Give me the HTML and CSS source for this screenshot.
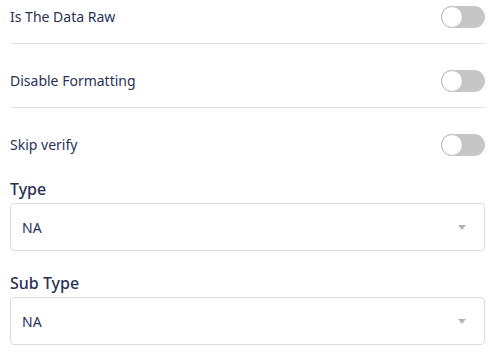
FILE: index.html
```html
<!DOCTYPE html>
<html lang="en">
<head>
    <meta charset="UTF-8">
    <title>Settings</title>
    <link rel="stylesheet" href="styles.css">
</head>
<body>
    <div class="settings">
        <div class="toggle-row divided">
            <span class="toggle-label">Is The Data Raw</span>
            <span class="switch"></span>
        </div>
        <div class="toggle-row divided">
            <span class="toggle-label">Disable Formatting</span>
            <span class="switch"></span>
        </div>
        <div class="toggle-row">
            <span class="toggle-label">Skip verify</span>
            <span class="switch"></span>
        </div>

        <div class="field">
            <label class="field-label">Type</label>
            <div class="select">
                <span>NA</span>
                <span class="arrow"></span>
            </div>
        </div>
        <div class="field">
            <label class="field-label">Sub Type</label>
            <div class="select">
                <span>NA</span>
                <span class="arrow"></span>
            </div>
        </div>
    </div>
</body>
</html>
```

FILE: styles.css
```css
body {
    margin: 0;
    padding: 0 7px 0 10px;
    background: #fff;
    color: #2b3156;
    font-family: "Noto Sans", "Open Sans", sans-serif;
}

.settings {
    display: flex;
    flex-direction: column;
}

.toggle-row {
    display: flex;
    align-items: center;
    justify-content: space-between;
    padding: 26px 0 15px;
}

.toggle-row:first-child {
    padding-top: 6px;
}

.toggle-row.divided {
    border-bottom: 1px solid #e2e2e2;
}

.toggle-label {
    font-size: 14px;
    line-height: 20px;
}

.switch {
    position: relative;
    width: 44px;
    height: 22px;
    border-radius: 11px;
    background-color: #c6c6c6;
}

.switch::after {
    content: "";
    position: absolute;
    left: 0;
    top: 0;
    width: 20px;
    height: 20px;
    border-radius: 50%;
    background: #fff;
    border: 1px solid #bdbdbd;
}

.field {
    display: flex;
    flex-direction: column;
    margin-top: 6px;
}

.field + .field {
    margin-top: 20px;
}

.field-label {
    font-size: 16px;
    font-weight: 500;
    line-height: 24px;
    margin-bottom: 2px;
}

.select {
    display: flex;
    align-items: center;
    justify-content: space-between;
    height: 46px;
    padding: 0 18px 0 11px;
    border: 1px solid #dcdcdc;
    border-radius: 4px;
    font-size: 14px;
}

.arrow {
    width: 0;
    height: 0;
    border-left: 4px solid transparent;
    border-right: 4px solid transparent;
    border-top: 5px solid #b3b3b3;
}
```
